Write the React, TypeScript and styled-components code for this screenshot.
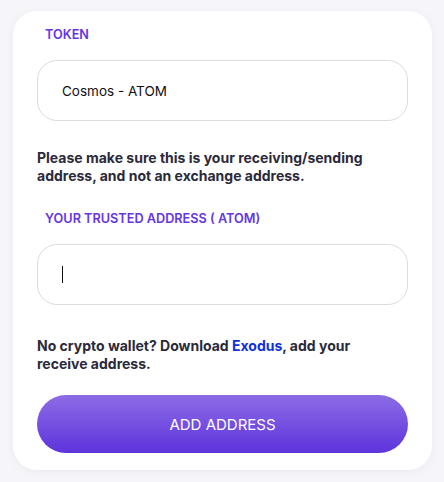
import React from "react";
import styled, { createGlobalStyle } from "styled-components";

const Global = createGlobalStyle`
  html, body { margin: 0; padding: 0; background: #f6f6fa; }
  body { font-family: "Inter", "Noto Sans", sans-serif; }
`;

const Page = styled.div`
  padding: 11px 12px 13px 13px;
`;

const Card = styled.div`
  width: 419px;
  box-sizing: border-box;
  background: #ffffff;
  border-radius: 24px;
  box-shadow: 0 2px 10px rgba(40, 40, 90, 0.06);
  padding: 16px 24px 17px 24px;
  display: flex;
  flex-direction: column;
`;

const Label = styled.div<{ $mt?: number }>`
  color: #6536e2;
  font-weight: 600;
  font-size: 12.7px;
  line-height: 15px;
  padding-left: 8px;
  margin-top: ${(p) => p.$mt ?? 0}px;
`;

const Field = styled.div<{ $mt?: number }>`
  height: 61px;
  box-sizing: border-box;
  border: 1px solid #dcdce0;
  border-radius: 20px;
  margin-top: ${(p) => p.$mt ?? 0}px;
  display: flex;
  align-items: center;
  padding-left: 24px;
  font-size: 13.5px;
  color: #111;
`;

const Caret = styled.span`
  display: inline-block;
  width: 1px;
  height: 17px;
  background: #111;
`;

const Note = styled.p<{ $mt?: number }>`
  margin: ${(p) => p.$mt ?? 0}px 0 0 0;
  font-weight: 700;
  font-size: 14px;
  line-height: 18px;
  color: #2b2a3a;
  max-width: 340px;
`;

const Link = styled.a`
  color: #1030e0;
  text-decoration: none;
`;

const Button = styled.button`
  margin-top: 22px;
  height: 58px;
  border: none;
  border-radius: 29px;
  background: linear-gradient(180deg, #8c6ce5 0%, #5e33dc 100%);
  color: #ffffff;
  font-family: "Inter", "Noto Sans", sans-serif;
  font-size: 15px;
  font-weight: 400;
  cursor: pointer;
`;

export default function App() {
  return (
    <>
      <Global />
      <Page>
        <Card>
          <Label>TOKEN</Label>
          <Field $mt={18}>Cosmos - ATOM</Field>
          <Note $mt={28}>
            Please make sure this is your receiving/sending address, and not an exchange address.
          </Note>
          <Label $mt={26}>YOUR TRUSTED ADDRESS ( ATOM)</Label>
          <Field $mt={18}>
            <Caret />
          </Field>
          <Note $mt={32}>
            No crypto wallet? Download <Link href="#">Exodus</Link>, add your receive address.
          </Note>
          <Button>ADD ADDRESS</Button>
        </Card>
      </Page>
    </>
  );
}
